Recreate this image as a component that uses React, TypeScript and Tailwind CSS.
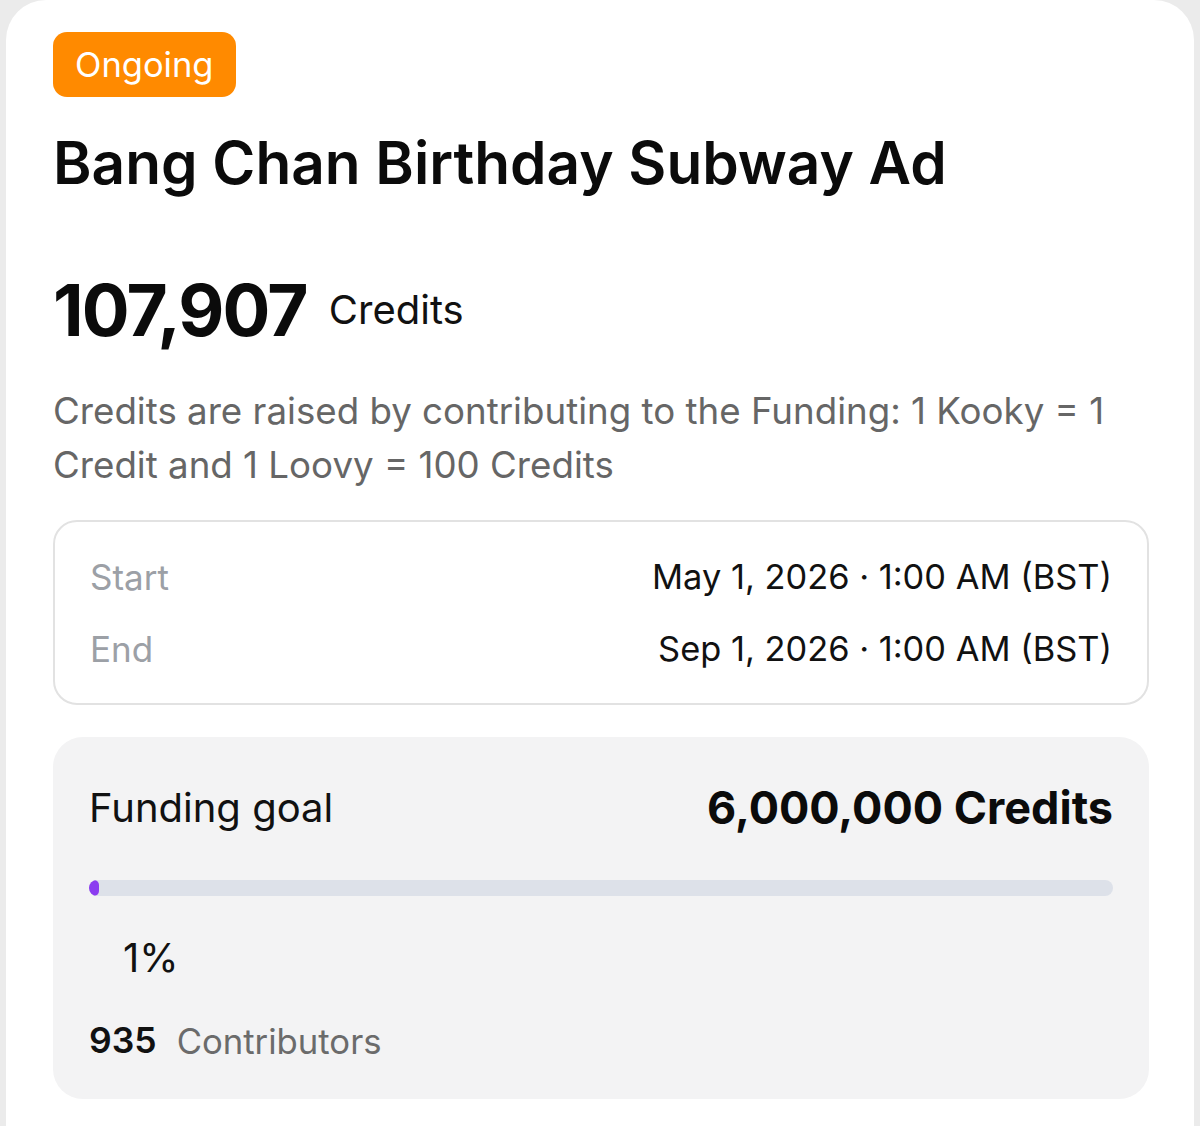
export default function App() {
  const raised = 107907;
  const goal = 6000000;
  const pct = Math.max(1, Math.floor((raised / goal) * 100));

  return (
    <div
      className="min-h-screen bg-[#ebebeb] px-[6px]"
      style={{ fontFamily: 'Inter, "Noto Sans", sans-serif' }}
    >
      <div className="min-h-[1126px] rounded-t-[40px] bg-white pl-[47px] pr-[45px] pt-[32px]">
        {/* Status badge */}
        <div className="inline-flex h-[65px] items-center rounded-[14px] bg-[#ff8a00] px-[22px] text-[34.5px] text-white">
          Ongoing
        </div>

        {/* Title */}
        <h1 className="mt-[31px] text-[58.5px] leading-[70px] font-semibold text-[#0b0b0b]">
          Bang Chan Birthday Subway Ad
        </h1>

        {/* Amount raised */}
        <div className="mt-[72px] flex items-center gap-[22px]">
          <span className="text-[71px] leading-[80px] font-bold tracking-tight text-[#0b0b0b]">
            107,907
          </span>
          <span className="text-[40px] text-[#111111]">Credits</span>
        </div>

        <p className="mt-[34px] text-[36.7px] leading-[54px] text-[#666666]">
          Credits are raised by contributing to the Funding: 1 Kooky = 1 Credit and 1 Loovy = 100 Credits
        </p>

        {/* Schedule */}
        <div className="mt-[28px] flex flex-col gap-[32px] rounded-[24px] border-2 border-[#e2e2e2] px-[35px] pb-[34px] pt-[35px] leading-[40px]">
          <div className="flex items-center justify-between">
            <span className="text-[35px] text-[#9ca0a6]">Start</span>
            <span className="text-[34.4px] text-[#111111]">May 1, 2026 · 1:00 AM (BST)</span>
          </div>
          <div className="flex items-center justify-between">
            <span className="text-[35px] text-[#9ca0a6]">End</span>
            <span className="text-[34.4px] text-[#111111]">Sep 1, 2026 · 1:00 AM (BST)</span>
          </div>
        </div>

        {/* Funding goal */}
        <div className="mt-[32px] rounded-[30px] bg-[#f3f3f4] px-[36px] pb-[36px] pt-[47px]">
          <div className="flex items-center justify-between leading-[48px]">
            <span className="text-[40px] text-[#111111]">Funding goal</span>
            <span className="text-[45px] font-bold text-[#0b0b0b]">6,000,000 Credits</span>
          </div>

          <div className="mt-[48px] h-[16px] w-full overflow-hidden rounded-full bg-[#dde1e9]">
            <div className="h-full rounded-full bg-[#8b3cf0]" style={{ width: `${pct}%` }} />
          </div>

          <div className="ml-[34px] mt-[38px] text-[40px] leading-[48px] text-[#111111]">{pct}%</div>

          <div className="mt-[37px] flex items-center gap-[20px] leading-[44px]">
            <span className="text-[35.5px] font-semibold text-[#111111]">935</span>
            <span className="text-[34.7px] text-[#6b6b6b]">Contributors</span>
          </div>
        </div>
      </div>
    </div>
  );
}
